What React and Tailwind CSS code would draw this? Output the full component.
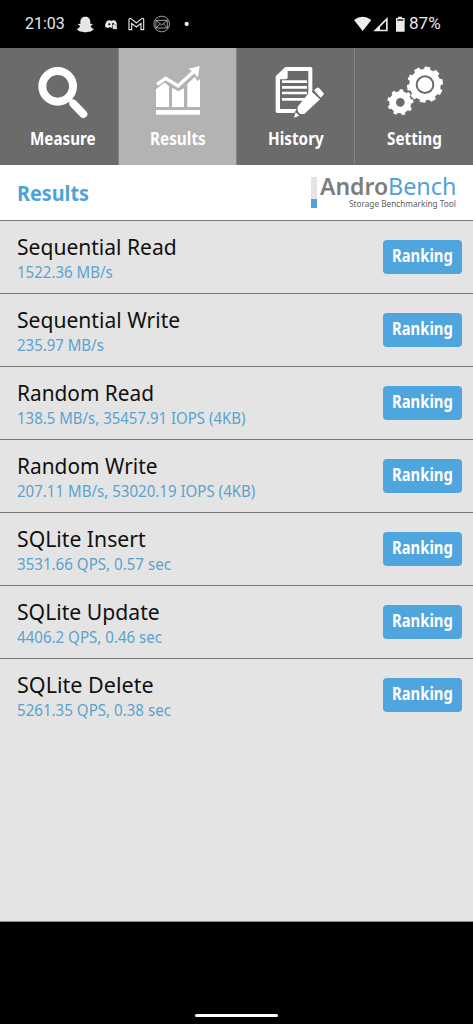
import React, { useLayoutEffect, useRef, useState } from "react";

const resultsData = [
  { id: 1, title: "Sequential Read", titleWidth: 160, value: "1522.36 MB/s", valueWidth: 96 },
  { id: 2, title: "Sequential Write", titleWidth: 163, value: "235.97 MB/s", valueWidth: 87 },
  { id: 3, title: "Random Read", titleWidth: 137, value: "138.5 MB/s, 35457.91 IOPS (4KB)", valueWidth: 229 },
  { id: 4, title: "Random Write", titleWidth: 140, value: "207.11 MB/s, 53020.19 IOPS (4KB)", valueWidth: 238 },
  { id: 5, title: "SQLite Insert", titleWidth: 129, value: "3531.66 QPS, 0.57 sec", valueWidth: 154 },
  { id: 6, title: "SQLite Update", titleWidth: 143, value: "4406.2 QPS, 0.46 sec", valueWidth: 145 },
  { id: 7, title: "SQLite Delete", titleWidth: 137, value: "5261.35 QPS, 0.38 sec", valueWidth: 154 },
];

// Squeezes or stretches a line of text to the given width
const FitText = ({ width, className = "", children }) => {
  const ref = useRef(null);
  const [scale, setScale] = useState(1);

  useLayoutEffect(() => {
    setScale(width / ref.current.offsetWidth);
  }, [width]);

  return (
    <span className={`block ${className}`} style={{ width }}>
      <span
        ref={ref}
        className="inline-block whitespace-nowrap origin-left"
        style={{ transform: `scaleX(${scale})` }}
      >
        {children}
      </span>
    </span>
  );
};

const MeasureIcon = () => (
  <svg viewBox="0 12 354 228" className="w-[118px] h-[76px]" fill="none" stroke="#fff">
    <circle cx="173" cy="127" r="46" strokeWidth="24" />
    <path d="M207 164l14 14" strokeWidth="13" />
    <path d="M220 179l30 31" strokeWidth="24" strokeLinecap="round" />
  </svg>
);

const ResultsIcon = () => (
  <svg viewBox="354 12 354 228" className="w-[118px] h-[76px]" fill="#fff">
    <path d="M468 198h132v14H468z" />
    <path d="M468 189v-53l23-18h6l10 9v62zM516 189v-58l19 11 17-9v56zM562 189v-69l23-22 7 14 8-7v84z" />
    <path d="M471 121l26-18 37 23 49-45" fill="none" stroke="#fff" strokeWidth="10" />
    <path d="M566 74l33-8-5 34-10-10-9-8z" />
  </svg>
);

const HistoryIcon = () => (
  <svg viewBox="0 12 354 228" className="w-[118px] h-[76px]">
    <path
      fill="#fff"
      fillRule="evenodd"
      d="M148 69h76q5 0 5 5v68l-12 11V81h-62v18q0 7-7 7h-16v89h50l-7 12H124q-5 0-5-5V97z"
    />
    <path d="M138 113h75M138 130h75M138 147h75M138 166h68" stroke="#fff" strokeWidth="8" />
    <path d="M185 188l39-48 28 26-47 44h-12q-10-6-8-22z" fill="#fff" />
    <path d="M234 139l8-7q4-3 8 1l12 13q3 4 0 7l-8 8z" fill="#fff" />
    <path d="M179 205l11 10-16 6z" fill="#fff" />
    <path d="M230 141l22 21" stroke="#6b6b6b" strokeWidth="3" />
  </svg>
);

const gearTeeth = [0, 36, 72, 108, 144, 180, 216, 252, 288, 324];
const smallGearTeeth = [5, 45, 85, 125, 165, 205, 245, 285, 325];

const SettingIcon = () => (
  <svg viewBox="354 12 354 228" className="w-[118px] h-[76px]">
    <g transform="translate(564 122)">
      <circle r="47" fill="#fff" />
      {gearTeeth.map((angle) => (
        <path key={angle} d="M-10 -43l2-11h16l2 11z" fill="#fff" transform={`rotate(${angle + 8})`} />
      ))}
      <circle r="25" fill="none" stroke="#6b6b6b" strokeWidth="6" />
    </g>
    <g transform="translate(490 175)">
      <circle r="23" fill="none" stroke="#fff" strokeWidth="20" />
      {smallGearTeeth.map((angle) => (
        <path key={angle} d="M-7 -29l2-10h10l2 10z" fill="#fff" transform={`rotate(${angle})`} />
      ))}
    </g>
  </svg>
);

const tabs = [
  { id: "measure", label: "Measure", width: 66, icon: MeasureIcon, className: "pl-2" },
  { id: "results", label: "Results", width: 56, icon: ResultsIcon, className: "pl-0.5" },
  { id: "history", label: "History", width: 56, icon: HistoryIcon, className: "pl-0.5" },
  { id: "setting", label: "Setting", width: 55, icon: SettingIcon, className: "pl-0.5" },
];

const StatusBar = () => (
  <div className="flex items-center h-[48px] bg-black pl-[25px] font-[Roboto]">
    <FitText width={40} className="text-[16px] leading-[48px] text-[#e8e8e8] shrink-0">
      21:03
    </FitText>
    {/* Notification icons */}
    <svg viewBox="195 0 405 144" className="w-[135px] h-[48px] shrink-0">
      <path
        fill="#e6e6e6"
        d="M256 50c9 0 15 6 15 15v7l5-1c3 1 2 4-4 6 1 5 4 8 9 10 1 3-4 4-6 5-1 3-3 2-7 3-4 0-7 2-12 2s-8-2-12-2c-4-1-6 0-7-3-2-1-7-2-6-5 5-2 8-5 9-10-6-2-7-5-4-6l5 1v-7c0-9 6-15 15-15z"
      />
      <path
        fill="#e6e6e6"
        d="M321 63l8-3 2 2h6l2-2 8 3c3 5 4 9 4 13h-9c-4 0-5 2-5 7-5 0-9-2-10 0l-4 1-8-4c0-7 2-12 6-17z"
      />
      <circle cx="328" cy="73" r="3" fill="#000" />
      <circle cx="339" cy="72" r="3" fill="#000" />
      <path d="M339 76v-3h6l2 3h4v12h-13V76z" fill="#e6e6e6" stroke="#000" strokeWidth="1" />
      <path
        d="M387 89V59q0-6 6-3l16 13 16-13q6-3 6 3v30h-8V70l-14 11-14-11v19z"
        fill="none"
        stroke="#e6e6e6"
        strokeWidth="3.500"
      />
      <g fill="none" stroke="#bdbdbd" strokeWidth="2.500">
        <circle cx="485" cy="72" r="23.500" />
        <path d="M468 61h34v23h-34zM468 61l17 14 17-14M468 84l12-13M502 84l-12-13" />
      </g>
      <circle cx="560" cy="72" r="6.500" fill="#e6e6e6" />
    </svg>
    {/* Wifi, signal and battery */}
    <svg viewBox="345 0 165 144" className="w-[55px] h-[48px] ml-auto shrink-0">
      <path d="M354 60q26-19 52 0l-26 33z" fill="#ececec" />
      <path d="M455 51v43h-43z" fill="#ececec" />
      <path d="M450 63v26h-18V81z" fill="#000" />
      <path d="M486 50h12v4h8v40q0 1-2 1h-22q-2 0-2-1V54h6z" fill="#ececec" />
      <path d="M484 58h18v4h-18z" fill="#000" />
    </svg>
    <FitText width={32} className="text-[16px] leading-[48px] text-[#e8e8e8] ml-[3px] mr-[32px] shrink-0">
      87%
    </FitText>
  </div>
);

const App = () => {
  const [activeTab, setActiveTab] = useState("results");

  return (
    <div className="flex flex-col w-[473px] h-[1024px] overflow-hidden bg-black font-['Noto_Sans',sans-serif]">
      <StatusBar />

      {/* Tabs */}
      <div className="flex h-[117px] bg-[#6b6b6b]">
        {tabs.map(({ id, label, width, icon: Icon, className }) => (
          <button
            key={id}
            onClick={() => setActiveTab(id)}
            className={`flex flex-col items-center w-[118px] last:w-[119px] text-left cursor-pointer shadow-[inset_1px_0_0_#858585] first:shadow-none ${
              activeTab === id ? "bg-[#b3b3b3]" : "bg-[#6b6b6b]"
            }`}
          >
            <Icon />
            <span className={className}>
              <FitText width={width} className="text-[17.500px] leading-[28px] font-bold text-white">
                {label}
              </FitText>
            </span>
          </button>
        ))}
      </div>

      {/* Title and logo */}
      <div className="flex justify-between h-[56px] bg-white border-b border-[#777777] pl-[17px] pr-[17px]">
        <FitText width={72} className="text-[22px] leading-[55px] font-bold text-[#4fa3d8]">
          Results
        </FitText>
        <div className="flex pt-3">
          <div className="w-[6px] h-[31px] bg-[#e4e4e4] flex flex-col justify-end">
            <div className="h-[9px] bg-[#4fa3dc]"></div>
          </div>
          <div className="flex flex-col items-end ml-[3px]">
            <div className="flex h-[22px]">
              <FitText width={68} className="text-[24px] leading-[18px] font-semibold text-[#7d7d7d]">
                Andro
              </FitText>
              <FitText width={68} className="text-[24px] leading-[18px] text-[#4fa3d8]">
                Bench
              </FitText>
            </div>
            <FitText width={107} className="text-[9px] leading-[9px] text-[#606060]">
              Storage Benchmarking Tool
            </FitText>
          </div>
        </div>
      </div>

      {/* Results list */}
      <div className="h-[701px] bg-[#e4e4e4] border-b border-[#8a8a8a]">
        {resultsData.map((result) => (
          <div
            key={result.id}
            className="flex justify-between h-[73px] border-b border-[#777777] last:border-b-0 pl-[17px] pr-[11px]"
          >
            <div className="pt-[12px]">
              <FitText width={result.titleWidth} className="text-[22.500px] leading-[28px] text-[#111111]">
                {result.title}
              </FitText>
              <FitText width={result.valueWidth} className="text-[15.500px] leading-[22px] text-[#5aa3cf]">
                {result.value}
              </FitText>
            </div>
            <button className="flex justify-center mt-[19px] w-[79px] h-[34px] rounded-[4px] bg-[#4fa5de] cursor-pointer text-left">
              <FitText width={61} className="text-[17px] leading-[31px] font-bold text-white">
                Ranking
              </FitText>
            </button>
          </div>
        ))}
      </div>

      {/* Gesture bar */}
      <div className="flex flex-1 items-end justify-center pb-[7px]">
        <div className="w-[83px] h-[3px] bg-white rounded-full"></div>
      </div>
    </div>
  );
};

export default App;
